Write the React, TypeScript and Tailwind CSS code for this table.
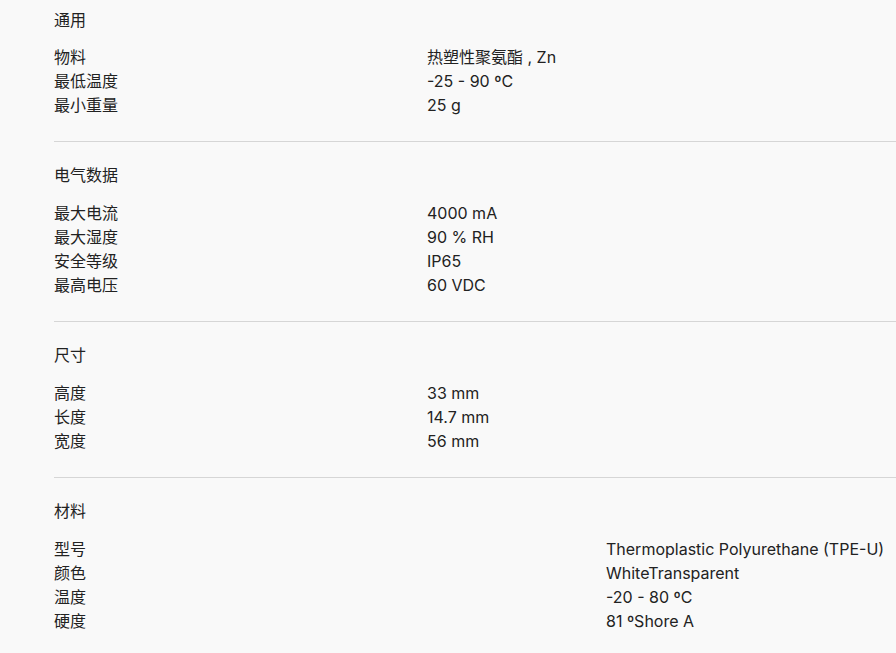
type Section = { title: string; rows: [string, string][]; labelWidth: string };

const sections: Section[] = [
  {
    title: "通用",
    labelWidth: "grid-cols-[373px_1fr]",
    rows: [
      ["物料", "热塑性聚氨酯 , Zn"],
      ["最低温度", "-25 - 90 ºC"],
      ["最小重量", "25 g"],
    ],
  },
  {
    title: "电气数据",
    labelWidth: "grid-cols-[373px_1fr]",
    rows: [
      ["最大电流", "4000 mA"],
      ["最大湿度", "90 % RH"],
      ["安全等级", "IP65"],
      ["最高电压", "60 VDC"],
    ],
  },
  {
    title: "尺寸",
    labelWidth: "grid-cols-[373px_1fr]",
    rows: [
      ["高度", "33 mm"],
      ["长度", "14.7 mm"],
      ["宽度", "56 mm"],
    ],
  },
  {
    title: "材料",
    labelWidth: "grid-cols-[552px_1fr]",
    rows: [
      ["型号", "Thermoplastic Polyurethane (TPE-U)"],
      ["颜色", "WhiteTransparent"],
      ["温度", "-20 - 80 ºC"],
      ["硬度", "81 ºShore A"],
    ],
  },
];

export default function App() {
  return (
    <div
      className="min-h-screen bg-[#f9f9f9] pl-[54px] text-base leading-6 text-[#222]"
      style={{ fontFamily: '"Inter", "Noto Sans CJK SC", sans-serif' }}
    >
      {sections.map((s, i) => (
        <div
          key={s.title}
          className={
            i === 0
              ? "pt-2 pb-6 border-b border-[#d6d6d6]"
              : i === sections.length - 1
              ? "pt-[21px] pb-6"
              : "pt-[21px] pb-6 border-b border-[#d6d6d6]"
          }
        >
          <div className={i === 0 ? "mb-[13px]" : "mb-[14px]"}>{s.title}</div>
          <div className={`grid ${s.labelWidth}`}>
            {s.rows.map(([k, v]) => (
              <div key={k} className="contents">
                <div>{k}</div>
                <div>{v}</div>
              </div>
            ))}
          </div>
        </div>
      ))}
    </div>
  );
}
